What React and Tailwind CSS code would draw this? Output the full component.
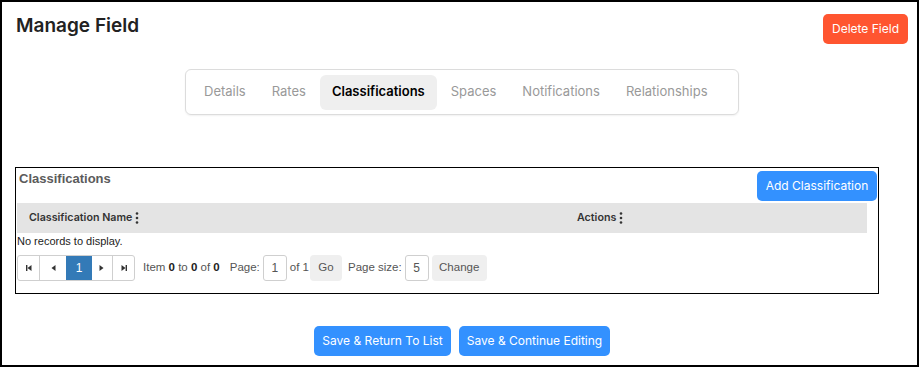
import React from 'react';

const tabs = ['Details', 'Rates', 'Classifications', 'Spaces', 'Notifications', 'Relationships'];

function Kebab() {
  return (
    <svg width="4" height="12" viewBox="0 0 4 12" className="ml-[3px]">
      <circle cx="2" cy="1.5" r="1.3" fill="#333" />
      <circle cx="2" cy="6" r="1.3" fill="#333" />
      <circle cx="2" cy="10.5" r="1.3" fill="#333" />
    </svg>
  );
}

function PagerIcon({ dir, bar }) {
  // dir: 'l' or 'r'
  return (
    <svg width="8" height="8" viewBox="0 0 8 8">
      {dir === 'l' ? (
        <>
          {bar && <rect x="1" y="1" width="1.4" height="6" fill="#333" />}
          <polygon points="6.5,1 2.5,4 6.5,7" fill="#333" />
        </>
      ) : (
        <>
          <polygon points="1.5,1 5.5,4 1.5,7" fill="#333" />
          {bar && <rect x="5.6" y="1" width="1.4" height="6" fill="#333" />}
        </>
      )}
    </svg>
  );
}

export default function App() {
  return (
    <div className="w-[919px] h-[367px] border-2 border-black bg-white flex flex-col font-['Inter',sans-serif] text-[#333]">
      {/* header */}
      <div className="flex justify-between items-start pl-[14px] pr-[9px] pt-[12px]">
        <h1 className="text-[19px] leading-[24px] font-semibold text-[#222]">Manage Field</h1>
        <button className="h-[30px] w-[85px] rounded-[5px] bg-[#ff5530] text-white text-[12px]">Delete Field</button>
      </div>

      {/* tabs */}
      <div className="ml-[183px] mt-[25px] w-[554px] flex items-center gap-[2px] h-[46px] pl-[6px] border border-[#dcdcdc] rounded-[6px] shadow-[0_1px_2px_rgba(0,0,0,0.06)]">
        {tabs.map((t) => (
          <div
            key={t}
            className={
              t === 'Classifications'
                ? 'h-[35px] px-[12px] flex items-center rounded-[6px] bg-[#efefef] text-[13px] font-semibold text-black'
                : 'h-[35px] px-[12px] flex items-center text-[13px] text-[#999]'
            }
          >
            {t}
          </div>
        ))}
      </div>

      {/* grid box */}
      <div className="ml-[13px] mt-[52px] w-[864px] h-[127px] border border-black pl-[1px] flex flex-col">
        <div className="flex justify-between items-start h-[35px]">
          <div className="pl-[2px] pt-[1px] text-[13px] font-bold text-[#5b5b5b] font-['Liberation_Sans',sans-serif]">Classifications</div>
          <button className="mt-[3px] mr-[1px] h-[30px] w-[120px] rounded-[5px] bg-[#3391ff] text-white text-[12px]">Add Classification</button>
        </div>
        <div className="mr-[11px] h-[30px] bg-[#e4e4e4] flex items-center text-[10.7px] font-semibold text-[#333]">
          <div className="w-[548px] pl-[12px] flex items-center">Classification Name<Kebab /></div>
          <div className="pl-[12px] flex items-center">Actions<Kebab /></div>
        </div>
        <div className="h-[16px] flex items-center text-[11px] text-[#222] font-['Liberation_Sans',sans-serif]">No records to display.</div>
        <div className="mt-[6px] flex items-center text-[11.5px] text-[#555] font-['Liberation_Sans',sans-serif]">
          <div className="flex h-[26px] border border-[#cfcfcf] rounded-[3px] overflow-hidden">
            <div className="w-[22px] flex items-center justify-center border-r border-[#cfcfcf]"><PagerIcon dir="l" bar /></div>
            <div className="w-[26px] flex items-center justify-center"><PagerIcon dir="l" /></div>
            <div className="w-[26px] flex items-center justify-center bg-[#337ab7] text-white text-[12px]">1</div>
            <div className="w-[21px] flex items-center justify-center border-r border-[#cfcfcf]"><PagerIcon dir="r" /></div>
            <div className="w-[21px] flex items-center justify-center"><PagerIcon dir="r" bar /></div>
          </div>
          <span className="ml-[8px]">Item <b className="text-[#222]">0</b> to <b className="text-[#222]">0</b> of <b className="text-[#222]">0</b></span>
          <span className="ml-[10px]">Page:</span>
          <div className="ml-[3px] w-[24px] h-[26px] border border-[#cfcfcf] rounded-[3px] flex items-center justify-center text-[12px]">1</div>
          <span className="ml-[3px]">of 1</span>
          <div className="ml-[1px] w-[32px] h-[26px] rounded-[4px] bg-[#efefef] flex items-center justify-center">Go</div>
          <span className="ml-[6px]">Page size:</span>
          <div className="ml-[3px] w-[24px] h-[26px] border border-[#cfcfcf] rounded-[3px] flex items-center justify-center text-[12px]">5</div>
          <div className="ml-[3px] w-[55px] h-[26px] rounded-[4px] bg-[#efefef] flex items-center justify-center">Change</div>
        </div>
      </div>

      {/* footer buttons */}
      <div className="mt-[32px] flex justify-center gap-[8px] ml-[5px]">
        <button className="h-[30px] w-[137px] rounded-[5px] bg-[#3391ff] text-white text-[12px]">Save &amp; Return To List</button>
        <button className="h-[30px] w-[151px] rounded-[5px] bg-[#3391ff] text-white text-[12px]">Save &amp; Continue Editing</button>
      </div>
    </div>
  );
}
